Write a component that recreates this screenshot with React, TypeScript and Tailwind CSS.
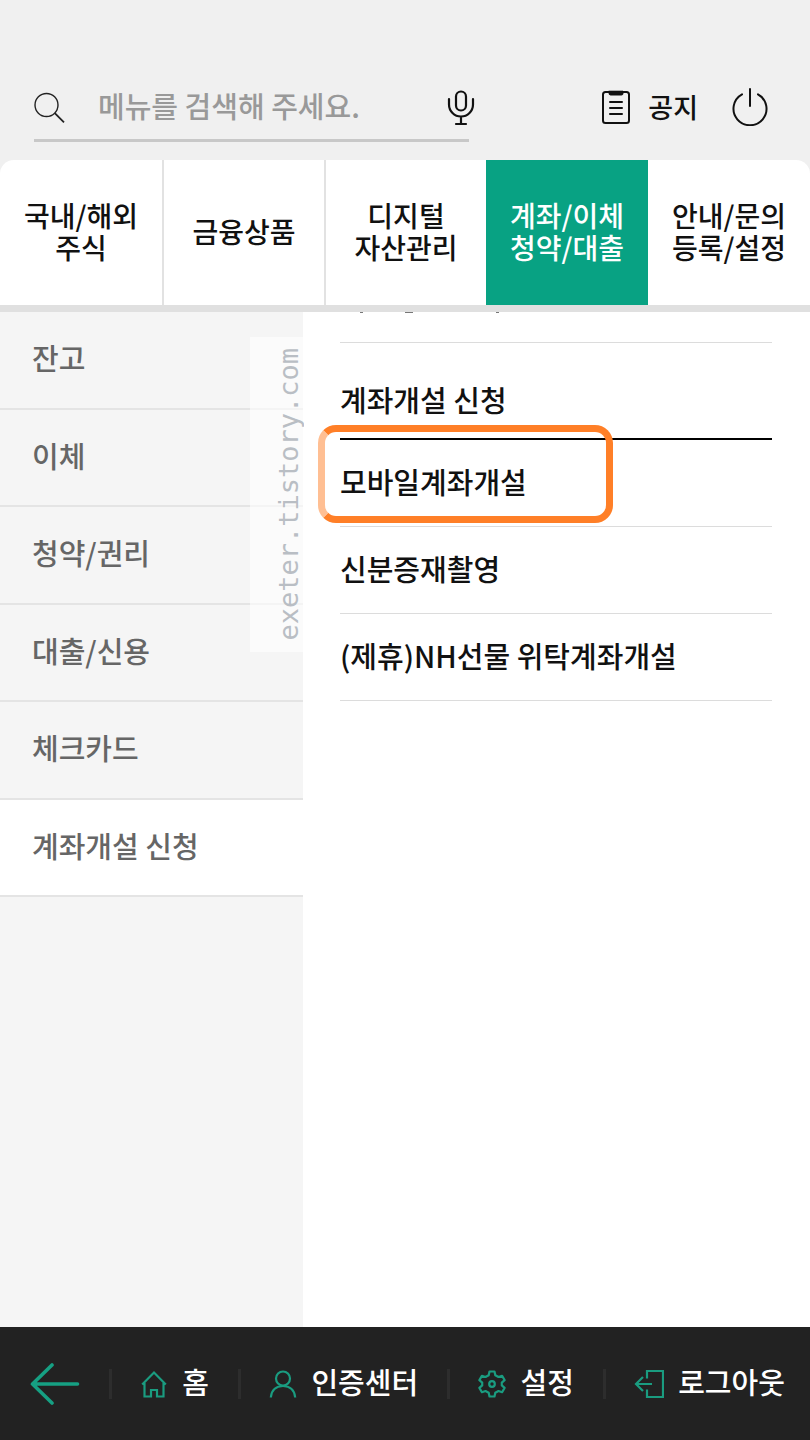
import React from "react";

const tabs = ["국내/해외\n주식", "금융상품", "디지털\n자산관리", "계좌/이체\n청약/대출", "안내/문의\n등록/설정"];

const categories = ["잔고", "이체", "청약/권리", "대출/신용", "체크카드", "계좌개설 신청"];

const links = ["모바일계좌개설", "신분증재촬영", "(제휴)NH선물 위탁계좌개설"];

function SearchIcon() {
  return (
    <svg className="size-8 shrink-0" viewBox="0 0 32 32" fill="none" stroke="#222" strokeWidth="1.4">
      <circle cx="12.5" cy="13" r="11.5" />
      <path d="M20.8 21.2 30 30.3" strokeWidth="1.8" />
    </svg>
  );
}

function MicIcon() {
  return (
    <svg className="h-9 w-7" viewBox="0 0 28 36" fill="none" stroke="#111" strokeWidth="2.2" strokeLinecap="round">
      <rect x="9" y="1.5" width="10" height="19" rx="5" />
      <path d="M2 9v5.500a12 12 0 0 0 24 0V9M14 27v7M9 34h10" />
    </svg>
  );
}

function NoticeIcon() {
  return (
    <svg className="h-[34px] w-7" viewBox="0 0 28 34" fill="none" stroke="#111" strokeWidth="2" strokeLinecap="round">
      <rect x="1" y="2" width="26" height="31" rx="2.500" />
      <path d="M7 1.200h14v2.300q0 1.500-1.500 1.500h-11Q7 5 7 3.500z" fill="#111" strokeWidth="1" />
      <path d="M8 12h12M8 18h12M8 24h12" />
    </svg>
  );
}

function PowerIcon() {
  return (
    <svg className="h-[38px] w-9" viewBox="0 0 36 38" fill="none" stroke="#111" strokeWidth="2" strokeLinecap="round">
      <path d="M10 6.300A16.500 16.500 0 1 0 26 6.300M18 1v17" />
    </svg>
  );
}

function BackIcon() {
  return (
    <svg className="h-[42px] w-[50px]" viewBox="0 0 50 42" fill="none" stroke="#16a083" strokeWidth="3.600" strokeLinecap="round" strokeLinejoin="round">
      <path d="M22 2 2.500 21 22 40M2.500 21h45" />
    </svg>
  );
}

function HomeIcon() {
  return (
    <svg className="size-7" viewBox="0 0 28 28" fill="none" stroke="#1a9c80" strokeWidth="2.2">
      <path d="M2.200 14.500 14 2.500l11.800 12M4.500 13v13.500H11v-6.500h6v6.500h6.500V13" />
    </svg>
  );
}

function UserIcon() {
  return (
    <svg className="size-7" viewBox="0 0 28 28" fill="none" stroke="#1a9c80" strokeWidth="2.2">
      <circle cx="14" cy="8.500" r="7" />
      <path d="M1.800 27.500C2.500 20 7.500 16 14 16s11.500 4 12.200 11.500" />
    </svg>
  );
}

function GearIcon() {
  return (
    <svg className="size-7" viewBox="0 0 28 28" fill="none" stroke="#1a9c80" strokeWidth="2.2" strokeLinejoin="round">
      <path d="M11.500 1.500h5l.8 3.700 3.200 1.800 3.600-1.200 2.500 4.300L23.800 12.600v2.800l2.800 2.500-2.500 4.300-3.600-1.200-3.200 1.800-.8 3.700h-5l-.8-3.700L7.500 21l-3.600 1.200-2.500-4.300 2.800-2.500v-2.800L1.400 10.100l2.500-4.300L7.500 7l3.200-1.800z" />
      <circle cx="14" cy="14" r="2.800" />
    </svg>
  );
}

function LogoutIcon() {
  return (
    <svg className="h-7 w-[30px]" viewBox="0 0 30 28" fill="none" stroke="#1a9c80" strokeWidth="2.2">
      <path d="M13 8.500V1h16v26H13v-7.500M18 14H2M9 7l-7 7 7 7" />
    </svg>
  );
}

function Divider() {
  return <span className="h-[30px] w-[3px] shrink-0 bg-[#2d2d2d]" />;
}

function FooterButton({ icon, label }: { icon: React.ReactNode; label: string }) {
  return (
    <button type="button" className="flex items-center gap-[14px]">
      {icon}
      <span className="pb-1">{label}</span>
    </button>
  );
}

export default function App() {
  return (
    <div className="flex min-h-screen flex-col bg-[#f0f0f0] font-['Noto_Sans_CJK_KR',sans-serif] font-medium text-[#111]">
      <header className="flex h-40 items-end justify-between pr-[42px] pb-[18px] pl-[34px]">
        <div className="flex h-[70px] w-[435px] items-center border-b-[3px] border-[#c8c8c8] pt-1">
          <SearchIcon />
          <input
            type="search"
            aria-label="메뉴 검색"
            placeholder="메뉴를 검색해 주세요."
            className="ml-8 min-w-0 flex-1 bg-transparent pb-1 text-[29px] outline-none placeholder:text-[#999]"
          />
          <button type="button" aria-label="음성 검색" className="-mr-[6px]">
            <MicIcon />
          </button>
        </div>
        <div className="flex h-[70px] items-center gap-[34px]">
          <button type="button" className="flex items-center gap-[18px] text-[27px]">
            <NoticeIcon />
            공지
          </button>
          <button type="button" aria-label="종료">
            <PowerIcon />
          </button>
        </div>
      </header>

      <nav className="grid h-[152px] grid-cols-5 overflow-hidden rounded-t-[14px] border-b-[7px] border-[#e0e0e0] bg-white">
        {tabs.map((label, i) => (
          <button
            key={label}
            type="button"
            className={`pb-1 text-[28px] leading-8 whitespace-pre-line ${
              i === 3 ? "bg-[#08a283] text-white" : i === 1 || i === 2 ? "border-l-2 border-[#e2e2e2]" : ""
            }`}
          >
            {label}
          </button>
        ))}
      </nav>

      <main className="flex flex-1 bg-white">
        <aside className="relative w-[303px] shrink-0 bg-[#f5f5f5]">
          <ul className="grid h-[585px] grid-rows-6">
            {categories.map((name, i) => (
              <li key={name} className={`border-b-2 border-[#e4e4e4] ${i === 5 ? "bg-white" : ""}`}>
                <button type="button" className="flex size-full items-center pb-1 pl-8 text-left text-[29px] text-[#666]">
                  {name}
                </button>
              </li>
            ))}
          </ul>
          <div className="absolute top-[25px] right-0 flex h-[315px] w-[53px] items-center justify-end bg-white/60">
            <span className="rotate-180 font-['DejaVu_Sans_Mono',monospace] text-[27px] leading-7 font-normal text-[#b9bec4] [writing-mode:vertical-rl]">
              exeter.tistory.com
            </span>
          </div>
        </aside>

        <section className="min-w-0 flex-1 pr-[38px] pl-[37px] text-[29px]">
          {/* Foot of the row that is scrolled under the tab bar */}
          <div className="flex h-[31px] border-b border-[#dcdcdc] pl-5">
            <span className="h-px w-[3px] bg-[#777]" />
            <span className="ml-[42px] h-px w-2 bg-[#777]" />
            <span className="ml-[83px] h-px w-[3px] bg-[#777]" />
          </div>
          <h2 className="flex h-[97px] items-center border-b-2 border-black pt-[18px]">계좌개설 신청</h2>
          <ul>
            {links.map((name, i) => (
              <li key={name} className="relative h-[87px] border-b border-[#dcdcdc]">
                <a href="#" className="flex h-full items-center pb-0.5">
                  {name}
                </a>
                {i === 0 && (
                  <span className="pointer-events-none absolute -top-[15px] -left-[22px] h-[98px] w-[295px] rounded-[18px] border-[7px] border-[#ff7f27] border-l-[#ffbf93]" />
                )}
              </li>
            ))}
          </ul>
        </section>
      </main>

      <footer className="flex h-[113px] items-center justify-between bg-[#222] pr-[25px] pl-[30px] text-[29px] text-white">
        <button type="button" aria-label="뒤로">
          <BackIcon />
        </button>
        <Divider />
        <FooterButton icon={<HomeIcon />} label="홈" />
        <Divider />
        <FooterButton icon={<UserIcon />} label="인증센터" />
        <Divider />
        <FooterButton icon={<GearIcon />} label="설정" />
        <Divider />
        <FooterButton icon={<LogoutIcon />} label="로그아웃" />
      </footer>
    </div>
  );
}
